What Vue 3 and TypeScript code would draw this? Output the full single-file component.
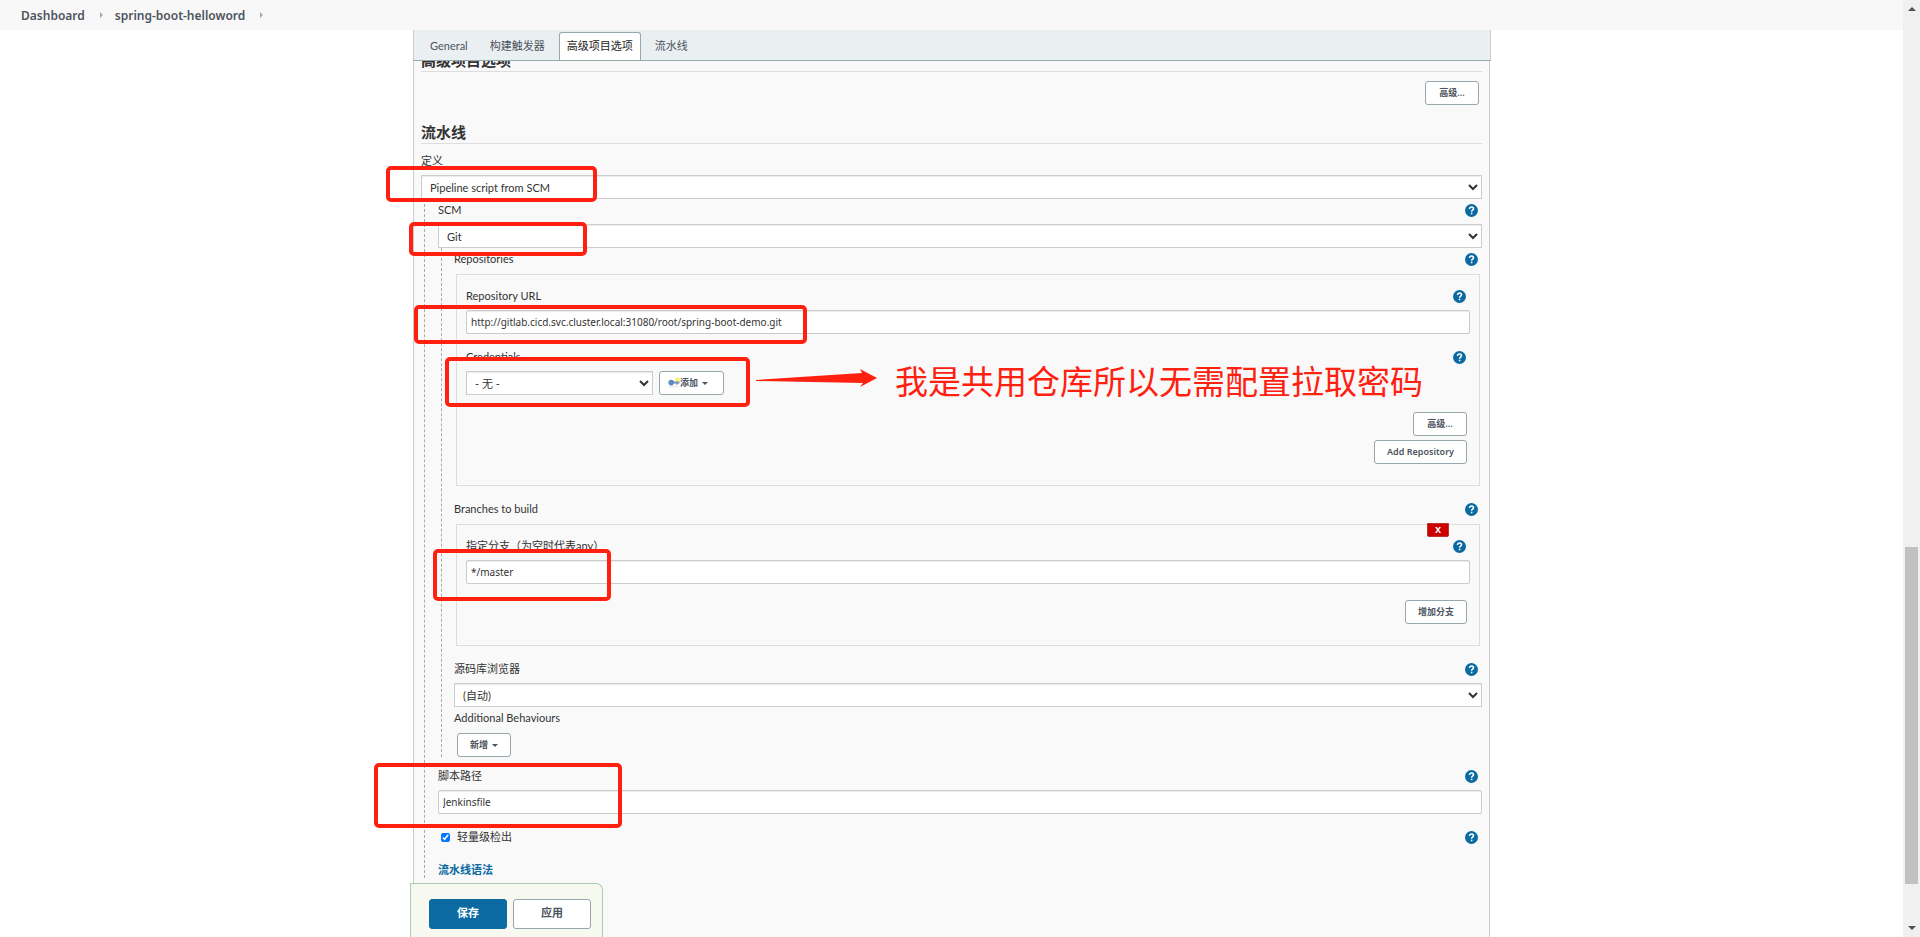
<script setup lang="ts">
import { ref } from 'vue'

interface Tab {
  label: string
  active: boolean
}

interface Mark {
  x: number
  y: number
  w: number
  h: number
}

const crumbs: string[] = ['Dashboard', 'spring-boot-helloword']

const tabs: Tab[] = [
  { label: 'General', active: false },
  { label: '构建触发器', active: false },
  { label: '高级项目选项', active: true },
  { label: '流水线', active: false },
]

const marks: Mark[] = [
  { x: -25, y: 138, w: 207, h: 32 },
  { x: -2, y: 194, w: 174, h: 30 },
  { x: 3, y: 277, w: 389, h: 35 },
  { x: 34, y: 329, w: 301, h: 46 },
  { x: 22, y: 521, w: 174, h: 48 },
  { x: -37, y: 735, w: 244, h: 61 },
]

const repoUrl = ref('http://gitlab.cicd.svc.cluster.local:31080/root/spring-boot-demo.git')
const branch = ref('*/master')
const scriptPath = ref('Jenkinsfile')
const lightweight = ref(true)
</script>

<template>
  <div class="page">
    <svg class="defs" aria-hidden="true">
      <symbol id="help" viewBox="0 0 13 13">
        <circle cx="6.5" cy="6.5" r="6.5" fill="#0b6aa2" />
        <path d="M4.5 5c0-1.300.9-2 2-2s2 .7 2 1.800c0 1.400-1.900 1.400-1.900 3" fill="none" stroke="#fff" stroke-width="1.500" />
        <rect x="5.800" y="8.700" width="1.600" height="1.500" fill="#fff" />
      </symbol>
    </svg>

    <div class="main">
      <nav class="crumbs">
        <template v-for="crumb in crumbs" :key="crumb">
          <a href="#" class="crumb">{{ crumb }}</a>
          <span class="crumb-arrow"></span>
        </template>
      </nav>

      <div class="panel">
        <div class="tabs">
          <a v-for="tab in tabs" :key="tab.label" href="#" class="tab" :class="{ active: tab.active }">{{ tab.label }}</a>
        </div>

        <form class="config" @submit.prevent>
          <h2 class="section first">高级项目选项</h2>
          <div class="actions top-actions">
            <button type="button" class="btn">高级...</button>
          </div>

          <h2 class="section">流水线</h2>
          <div class="row definition"><label for="definition">定义</label></div>
          <select id="definition" class="field">
            <option>Pipeline script from SCM</option>
          </select>

          <div class="nested">
            <div class="row">
              <label for="scm">SCM</label>
              <a href="#" class="help" aria-label="Help"><svg><use href="#help" /></svg></a>
            </div>
            <select id="scm" class="field">
              <option>Git</option>
            </select>

            <div class="nested inner">
              <div class="row">
                <span>Repositories</span>
                <a href="#" class="help" aria-label="Help"><svg><use href="#help" /></svg></a>
              </div>
              <div class="box">
                <div class="row">
                  <label for="repo-url">Repository URL</label>
                  <a href="#" class="help" aria-label="Help"><svg><use href="#help" /></svg></a>
                </div>
                <input id="repo-url" v-model="repoUrl" type="text" class="field" />
                <div class="row spaced">
                  <label for="credentials">Credentials</label>
                  <a href="#" class="help" aria-label="Help"><svg><use href="#help" /></svg></a>
                </div>
                <div class="credentials">
                  <select id="credentials" class="field">
                    <option>- 无 -</option>
                  </select>
                  <button type="button" class="btn add">
                    <svg class="key" viewBox="0 0 12 12" aria-hidden="true">
                      <ellipse cx="6" cy="9.500" rx="5" ry="1.200" fill="#ececec" />
                      <circle cx="9.500" cy="2.800" r="2.300" fill="#fbf06a" />
                      <path d="M4 4.600h7.500v2h-1.500v1h-2v-1H4z" fill="#6f97c4" />
                      <circle cx="3.200" cy="5.600" r="2.800" fill="#5a89c0" />
                      <circle cx="2.200" cy="5.300" r=".8" fill="#6f97c4" />
                    </svg>
                    <span>添加</span>
                    <span class="caret"></span>
                  </button>
                </div>
                <div class="actions repo-actions">
                  <button type="button" class="btn">高级...</button>
                  <button type="button" class="btn">Add Repository</button>
                </div>
              </div>

              <div class="row spaced">
                <span>Branches to build</span>
                <a href="#" class="help" aria-label="Help"><svg><use href="#help" /></svg></a>
              </div>
              <div class="box">
                <button type="button" class="remove">X</button>
                <div class="row">
                  <label for="branch">指定分支（为空时代表any）</label>
                  <a href="#" class="help" aria-label="Help"><svg><use href="#help" /></svg></a>
                </div>
                <input id="branch" v-model="branch" type="text" class="field" />
                <div class="actions branch-actions">
                  <button type="button" class="btn">增加分支</button>
                </div>
              </div>

              <div class="row spaced">
                <label for="browser">源码库浏览器</label>
                <a href="#" class="help" aria-label="Help"><svg><use href="#help" /></svg></a>
              </div>
              <select id="browser" class="field">
                <option>(自动)</option>
              </select>
              <div class="row"><span>Additional Behaviours</span></div>
              <button type="button" class="btn behaviours">
                <span>新增</span>
                <span class="caret"></span>
              </button>
            </div>

            <div class="row script-row">
              <label for="script-path">脚本路径</label>
              <a href="#" class="help" aria-label="Help"><svg><use href="#help" /></svg></a>
            </div>
            <input id="script-path" v-model="scriptPath" type="text" class="field" />
            <div class="row spaced">
              <label class="check"><input v-model="lightweight" type="checkbox" />轻量级检出</label>
              <a href="#" class="help" aria-label="Help"><svg><use href="#help" /></svg></a>
            </div>
            <a href="#" class="syntax">流水线语法</a>
          </div>
        </form>

        <svg class="marks" aria-hidden="true">
          <rect v-for="(m, i) in marks" :key="i" :x="m.x" :y="m.y" :width="m.w" :height="m.h" rx="3" />
          <path d="M343 350 L449 343 L447 339 L464 348 L447 357 L450 353 L343 351 Z" />
        </svg>
        <p class="note">我是共用仓库所以无需配置拉取密码</p>

        <div class="save-bar">
          <button type="button" class="big primary">保存</button>
          <button type="button" class="big">应用</button>
        </div>
      </div>
    </div>

    <div class="scrollbar" aria-hidden="true">
      <span class="up"></span>
      <div class="track"><div class="thumb"></div></div>
      <span class="down"></span>
    </div>
  </div>
</template>

<style>
body {
  background: #fff;
}
</style>

<style scoped>
* {
  box-sizing: border-box;
}

.page {
  display: flex;
  height: 100vh;
  overflow: hidden;
  font: 11px/22px Lato, "Noto Sans CJK SC", sans-serif;
  color: #333;
}

.defs {
  position: absolute;
  width: 0;
  height: 0;
}

a {
  color: inherit;
  text-decoration: none;
}

.main {
  flex: 1;
  min-width: 0;
  display: flex;
  flex-direction: column;
}

.crumbs {
  flex: none;
  display: flex;
  align-items: center;
  height: 30px;
  padding: 2px 0 0 21px;
  background: #f8f8f8;
}

.crumb {
  font-family: "Noto Sans", sans-serif;
  font-size: 12px;
  font-weight: 600;
  color: #4d545d;
}

.crumb-arrow {
  margin: 0 12px 2px 15px;
  border: 3px solid transparent;
  border-left-color: #aaa;
  border-right-width: 0;
}

.panel {
  position: relative;
  flex: 1;
  min-height: 0;
  display: flex;
  flex-direction: column;
  width: min(1077px, 100%);
  margin: 0 auto;
}

.tabs {
  flex: none;
  display: flex;
  align-items: flex-end;
  gap: 6px;
  height: 31px;
  margin-right: -1px;
  padding-left: 8px;
  background: #eaeff2;
  border: 1px solid #98a6ad;
  border-color: #ccc #ccc #98a6ad;
  border-top: 0;
}

.tab {
  height: 28px;
  padding: 0 7px;
  line-height: 25px;
  color: #4d545d;
  border: 1px solid transparent;
  border-bottom: 0;
  border-radius: 3px 3px 0 0;
}

.tab.active {
  color: #222;
  background: #fff;
  border-color: #98a6ad;
}

.config {
  flex: 1;
  min-height: 0;
  overflow: hidden;
  padding: 0 7px;
  background: #f9f9f9;
  border: solid #ccc;
  border-width: 0 1px;
}

.section {
  margin: 0;
  font-size: 15px;
  font-weight: 600;
  line-height: 22px;
  border-bottom: 1px solid #ddd;
}

.section.first {
  margin-top: -12px;
}

.row {
  display: flex;
  align-items: center;
  justify-content: space-between;
  height: 22px;
  margin-bottom: 3px;
}

.row.definition {
  margin-top: 6px;
}

.row.spaced {
  margin-top: 12px;
}

.row.script-row {
  margin-top: 8px;
}

.help {
  width: 13px;
  height: 13px;
  margin-right: 4px;
}

.help svg {
  display: block;
  width: 13px;
  height: 13px;
}

.field {
  display: block;
  width: 100%;
  height: 24px;
  margin: 0;
  padding: 0 4px;
  font: inherit;
  line-height: 20px;
  color: #333;
  background: #fff;
  border: 1px solid #ccc;
  border-radius: 0;
  box-shadow: inset 0 1px 1px rgba(0, 0, 0, 0.08);
}

input.field {
  font-family: "Noto Sans", "Noto Sans CJK SC", sans-serif;
  font-size: 10px;
  border-radius: 2px;
}

.nested {
  margin-left: 3px;
  padding-left: 13px;
  border-left: 1px dashed #aaa;
}

.nested.inner {
  padding-left: 12px;
}

.box {
  position: relative;
  margin: 4px 2px 0;
  padding: 10px 9px 21px;
  border: 1px solid #ddd;
}

.actions {
  display: flex;
  flex-direction: column;
  align-items: flex-end;
  gap: 4px;
  padding-right: 3px;
}

.top-actions {
  padding-top: 9px;
  padding-bottom: 16px;
}

.repo-actions {
  padding-top: 17px;
}

.branch-actions {
  padding-top: 16px;
}

.btn {
  display: inline-flex;
  align-items: center;
  justify-content: center;
  min-width: 54px;
  height: 24px;
  margin: 0;
  padding: 0 12px;
  font: 600 9px/20px "Noto Sans", "Noto Sans CJK SC", sans-serif;
  color: #4d545d;
  background: #fff;
  border: 1px solid #98a6ad;
  border-radius: 3px;
}

.caret {
  margin-left: 4px;
  border: 3px solid transparent;
  border-top-color: #4d545d;
  border-bottom-width: 0;
}

.credentials {
  display: flex;
  gap: 6px;
}

.credentials .field {
  width: 187px;
}

.btn.add {
  justify-content: flex-start;
  width: 65px;
  padding: 0 8px;
}

.key {
  width: 12px;
  height: 12px;
}

.btn.behaviours {
  display: flex;
  margin: 4px 0 0 3px;
}

.remove {
  position: absolute;
  top: -2px;
  right: 30px;
  width: 22px;
  height: 14px;
  padding: 0;
  font: 700 9px/12px "Noto Sans", sans-serif;
  color: #fff;
  background: #c00;
  border: 1px solid #b33;
  border-radius: 0 0 2px 2px;
}

.check {
  display: flex;
  align-items: center;
  gap: 7px;
}

.check input {
  width: 9px;
  height: 9px;
  margin: 0 0 0 3px;
}

.syntax {
  display: block;
  margin-top: 14px;
  font-weight: 600;
  line-height: 16px;
  color: #0b6aa2;
}

.marks {
  position: absolute;
  top: 0;
  left: 0;
  width: 100%;
  height: 100%;
  overflow: visible;
  pointer-events: none;
}

.marks rect {
  fill: none;
  stroke: #ff2010;
  stroke-width: 4;
}

.marks path {
  fill: #ff2010;
}

.note {
  position: absolute;
  top: 329px;
  left: 482px;
  margin: 0;
  font-size: 33px;
  line-height: 44px;
  font-weight: 400;
  color: #ff2010;
  white-space: nowrap;
}

.save-bar {
  position: absolute;
  bottom: 0;
  left: -3px;
  display: flex;
  gap: 6px;
  padding: 15px 11px 8px 18px;
  background: rgba(247, 248, 239, 0.95);
  border: 1px solid #a8ccb5;
  border-bottom: 0;
  border-radius: 0 7px 0 0;
}

.big {
  width: 78px;
  height: 30px;
  padding: 0 0 2px;
  font: 600 11px/26px "Noto Sans", "Noto Sans CJK SC", sans-serif;
  color: #4d545d;
  background: #fff;
  border: 1px solid #98a6ad;
  border-radius: 3px;
}

.big.primary {
  font-weight: 700;
  color: #fff;
  background: #0b6aa2;
  border-color: #0b6aa2;
}

.scrollbar {
  flex: none;
  display: flex;
  flex-direction: column;
  align-items: center;
  width: 17px;
  padding: 7px 0;
  background: #f0f0f0;
}

.up {
  border: 4px solid transparent;
  border-top-width: 0;
  border-bottom-color: #505050;
}

.down {
  border: 4px solid transparent;
  border-bottom-width: 0;
  border-top-color: #505050;
}

.track {
  flex: 1;
  display: flex;
  flex-direction: column;
  justify-content: flex-end;
  width: 13px;
  padding-bottom: 42px;
}

.thumb {
  height: 337px;
  background: #c1c1c1;
}
</style>
